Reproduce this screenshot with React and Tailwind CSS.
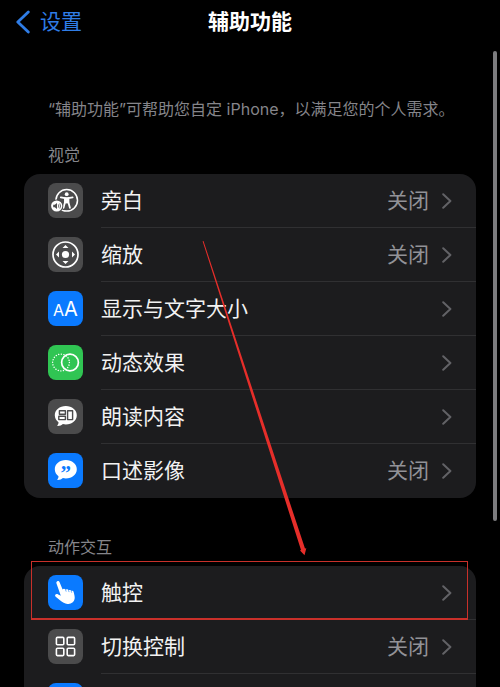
import React from "react";

const VoiceOverIcon = () => (
  <svg viewBox="0 0 35 35" className="size-full" aria-hidden="true">
    <circle cx="18.7" cy="17.3" r="10.8" fill="none" stroke="#fff" strokeWidth="1.5" />
    <circle cx="18.7" cy="11.2" r="1.9" fill="#fff" />
    <path
      d="M12.8 14.4 17 15.2v4l-1.5 5.6M24.6 14.4l-4.2.8v4l1.5 5.6"
      fill="none"
      stroke="#fff"
      strokeWidth="1.8"
      strokeLinecap="round"
      strokeLinejoin="round"
    />
    <path d="M16.3 14.2h4.8v6.2h-4.8z" fill="#fff" />
    <circle cx="8.7" cy="23" r="6.6" fill="#4b4b4c" />
    <circle cx="8.7" cy="23" r="5.6" fill="#fff" />
    <path d="M5.2 21.8h1.6l2.2-1.9v6.2l-2.2-1.9H5.2z" fill="#4b4b4c" />
    <path d="M10.3 21.4q1 1.6 0 3.2M11.8 20.5q1.6 2.5 0 5" fill="none" stroke="#4b4b4c" strokeWidth=".8" />
  </svg>
);

const ZoomIcon = () => (
  <svg viewBox="0 0 35 35" className="size-full" aria-hidden="true">
    <circle cx="17.5" cy="17.5" r="12.5" fill="none" stroke="#fff" strokeWidth="1.7" />
    <circle cx="17.5" cy="17.5" r="3.6" fill="#fff" />
    <path d="M17.5 8l3 3h-6zM17.5 27l3-3h-6zM8 17.5l3-3v6zM27 17.5l-3-3v6z" fill="#fff" />
  </svg>
);

const TextSizeIcon = () => (
  <span className="flex items-baseline font-['Inter','Liberation_Sans',sans-serif] leading-none text-white" aria-hidden="true">
    <span className="text-base">A</span>
    <span className="text-xl">A</span>
  </span>
);

const MotionIcon = () => (
  <svg viewBox="0 0 35 35" className="size-full" aria-hidden="true" fill="none" stroke="#fff">
    <circle cx="13" cy="17.5" r="8.4" strokeWidth="1.4" strokeLinecap="round" strokeDasharray=".1 2.54" />
    <circle cx="22" cy="17.5" r="8.4" strokeWidth="1.7" />
  </svg>
);

const Bubble = () => (
  <path
    d="M17.8 7c6.2 0 11 4 11 9.2s-4.8 9.2-11 9.2c-1 0-2-.1-2.9-.3-1.2 1.1-3 1.9-5 2-.6 0-.7-.5-.4-.9.8-1 1.1-2 1-3C8.2 21.5 6.8 19.1 6.8 16.2 6.8 11 11.6 7 17.8 7z"
    fill="#fff"
  />
);

const SpokenContentIcon = () => (
  <svg viewBox="0 0 35 35" className="size-full" aria-hidden="true">
    <Bubble />
    <g fill="none" stroke="#4b4b4c" strokeWidth="1.4" strokeLinejoin="round">
      <rect x="11.4" y="11.8" width="6" height="3.4" />
      <rect x="10.8" y="17.2" width="6.6" height="3.4" />
      <rect x="19.6" y="11.8" width="5" height="8.8" />
    </g>
  </svg>
);

const AudioDescriptionIcon = () => (
  <svg viewBox="0 0 35 35" className="size-full" aria-hidden="true">
    <Bubble />
    <text
      x="17.8"
      y="27"
      textAnchor="middle"
      fill="#0a7aff"
      className="font-['Liberation_Serif',serif] text-[21px] font-bold"
    >
      ”
    </text>
  </svg>
);

const TouchIcon = () => (
  <svg viewBox="0 0 35 35" className="size-full" aria-hidden="true">
    <path
      d="M9.3 6.2c1-.4 1.9.1 2.3 1l3 7.3c.5-.8 2.3-1 2.9.3.7-.9 2.5-.9 3 .5.8-.7 2.3-.5 2.7.7 1-.5 2.2 0 2.5 1.2.6 2.3 1.3 4.6.9 6.9-.6 3.4-3.8 5.3-7.2 4.8-2.7-.4-4.9-1.8-7.1-3.4l-4.3-3.6c-.8-.7-1.2-1.5-.7-2.2.6-.8 1.8-.8 2.9-.3l2.6 1.3L8.5 8.5c-.4-1-.1-1.9.8-2.3z"
      fill="#fff"
    />
    <path d="M17.5 14.7l.7 1.9M20.5 15.2l.6 1.9M23.2 16l.5 1.7" stroke="#0a7aff" strokeWidth=".6" />
  </svg>
);

const SwitchControlIcon = () => (
  <svg viewBox="0 0 35 35" className="size-full" aria-hidden="true" fill="none" stroke="#fff" strokeWidth="1.6">
    <rect x="8.4" y="8.4" width="7.4" height="7.4" rx="1" />
    <rect x="19.2" y="8.4" width="7.4" height="7.4" rx="1" />
    <rect x="8.4" y="19.2" width="7.4" height="7.4" rx="1" />
    <rect x="19.2" y="19.2" width="7.4" height="7.4" rx="1" />
  </svg>
);

const visionItems = [
  { label: "旁白", value: "关闭", icon: VoiceOverIcon, color: "bg-[#4b4b4c]" },
  { label: "缩放", value: "关闭", icon: ZoomIcon, color: "bg-[#4b4b4c]" },
  { label: "显示与文字大小", icon: TextSizeIcon, color: "bg-[#0a7aff]" },
  { label: "动态效果", icon: MotionIcon, color: "bg-[#30c553]" },
  { label: "朗读内容", icon: SpokenContentIcon, color: "bg-[#4b4b4c]" },
  { label: "口述影像", value: "关闭", icon: AudioDescriptionIcon, color: "bg-[#0a7aff]" },
];

const motorItems = [
  { label: "触控", icon: TouchIcon, color: "bg-[#0a7aff]", highlighted: true },
  { label: "切换控制", value: "关闭", icon: SwitchControlIcon, color: "bg-[#4b4b4c]" },
  { label: "", color: "bg-[#0a7aff]" },
];

const SettingsRow = ({ item, last }) => {
  const Icon = item.icon;

  return (
    <li className="relative">
      <button
        type="button"
        aria-label={item.label ? undefined : "more"}
        className="flex w-full items-stretch pl-6 text-left"
      >
        <span
          className={`my-[9px] flex size-[35px] shrink-0 items-center justify-center rounded-lg ${item.color}`}
        >
          {Icon && <Icon />}
        </span>
        <span
          className={`ml-[18px] flex min-h-[54px] flex-1 items-center pr-6 ${
            last ? "" : "border-b border-[#303032]"
          }`}
        >
          <span className="flex-1 text-[21px] leading-6 text-[#f2f2f2]">{item.label}</span>
          {item.value && (
            <span className="mr-[13px] text-[21px] leading-6 text-[#929297]">{item.value}</span>
          )}
          <svg viewBox="0 0 10 16" className="h-4 w-[10px]" fill="none" aria-hidden="true">
            <path d="M1.2 1.2 8.4 8l-7.2 6.8" stroke="#626266" strokeWidth="2" strokeLinecap="round" strokeLinejoin="round" />
          </svg>
        </span>
      </button>

      {/* Highlight frame */}
      {item.highlighted && (
        <span className="pointer-events-none absolute -top-[5px] right-2 bottom-0 left-[7px] border border-b-2 border-[#c9302a]" />
      )}
    </li>
  );
};

const SettingsSection = ({ title, items }) => (
  <section className="px-6">
    <h2 className="mb-[9px] px-6 text-base leading-5 text-[#85858a]">{title}</h2>
    <ul className="rounded-2xl bg-[#1c1c1e]">
      {items.map((item, index) => (
        <SettingsRow key={index} item={item} last={index === items.length - 1} />
      ))}
    </ul>
  </section>
);

const App = () => {
  return (
    <div className="relative h-screen overflow-hidden bg-black font-['Inter','Noto_Sans_CJK_SC',sans-serif]" lang="zh-CN">
      {/* Header */}
      <header className="grid h-11 grid-cols-[1fr_auto_1fr] items-center px-4">
        <a href="#settings" className="flex items-center text-[21px] leading-6 text-[#2f7de6]">
          <svg viewBox="0 0 14 24" className="mr-[10px] h-6 w-[14px]" fill="none" aria-hidden="true">
            <path d="M12.3 2 1.8 12l10.5 10" stroke="currentColor" strokeWidth="2.8" strokeLinecap="round" strokeLinejoin="round" />
          </svg>
          设置
        </a>
        <h1 className="text-[21px] leading-6 font-bold text-white">辅助功能</h1>
      </header>

      <main className="flex flex-col gap-[39px] pt-[55px]">
        <div className="flex flex-col gap-[26px]">
          <p className="px-12 text-base leading-5 whitespace-nowrap text-[#85858a]">
            “辅助功能”可帮助您自定 iPhone，以满足您的个人需求。
          </p>
          <SettingsSection title="视觉" items={visionItems} />
        </div>
        <SettingsSection title="动作交互" items={motorItems} />
      </main>

      {/* Scroll indicator */}
      <div className="absolute top-[51px] right-[3px] h-[470px] w-1 rounded-full bg-[#7d7d7f]" />

      {/* Pointer arrow */}
      <svg
        viewBox="0 0 110 320"
        className="pointer-events-none absolute top-[240px] left-[200px] h-[320px] w-[110px]"
        aria-hidden="true"
      >
        <path d="M2.6 1.2 3.5 1 105 308.6 106.3 308.2 104.5 315.3 100 310.4 101 309.9z" fill="#e62e2a" />
      </svg>
    </div>
  );
};

export default App;
